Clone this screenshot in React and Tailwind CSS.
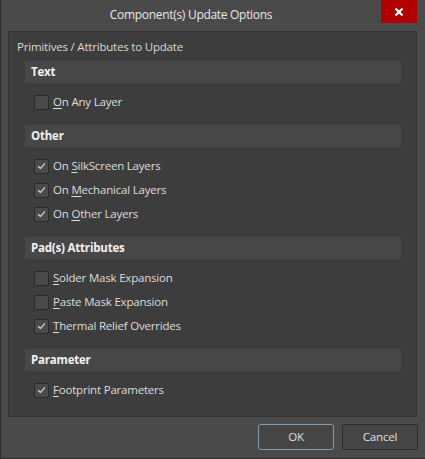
import React from "react";

const sections = [
  { title: "Text", items: [{ pre: "", key: "O", rest: "n Any Layer", checked: false }] },
  {
    title: "Other",
    items: [
      { pre: "On ", key: "S", rest: "ilkScreen Layers", checked: true },
      { pre: "On ", key: "M", rest: "echanical Layers", checked: true },
      { pre: "On ", key: "O", rest: "ther Layers", checked: true },
    ],
  },
  {
    title: "Pad(s) Attributes",
    items: [
      { pre: "", key: "S", rest: "older Mask Expansion", checked: false },
      { pre: "", key: "P", rest: "aste Mask Expansion", checked: false },
      { pre: "", key: "T", rest: "hermal Relief Overrides", checked: true },
    ],
  },
  { title: "Parameter", items: [{ pre: "", key: "F", rest: "ootprint Parameters", checked: true }] },
];

const CheckBox = ({ checked }) => (
  <span className="w-[15px] h-[15px] rounded-[2px] border border-[#2a2a2a] bg-[#4a4a4a] flex items-center justify-center">
    {checked && (
      <svg width="9" height="8" viewBox="0 0 9 8" fill="none">
        <path d="M1 4.2 L3.4 6.4 L8 1.4" stroke="#dddddd" strokeWidth="1.2" />
      </svg>
    )}
  </span>
);

const Row = ({ item }) => (
  <div className="h-6 flex items-center pl-[9px] gap-1">
    <CheckBox checked={item.checked} />
    <span>
      {item.pre}
      <span className="underline underline-offset-2">{item.key}</span>
      {item.rest}
    </span>
  </div>
);

export default function App() {
  return (
    <div
      className="w-[425px] h-[459px] bg-[#4a4a4a] border-l border-b border-[#2a2a2a] flex flex-col text-[11.5px] tracking-[-0.2px] text-[#dedede]"
      style={{ fontFamily: '"Segoe UI", "Open Sans", sans-serif' }}
    >
      {/* title bar */}
      <div className="h-[31px] flex">
        <div className="w-[380px] flex items-center justify-center">
          <span className="text-[12px] tracking-[-0.3px] text-[#e8e8e8] -mt-[1px]">Component(s) Update Options</span>
        </div>
        <button className="w-[36px] h-[23px] bg-[#b00000] flex items-center justify-center">
          <svg width="10" height="10" viewBox="0 0 10 10">
            <path d="M1.5 1.5 L8.5 8.5 M8.5 1.5 L1.5 8.5" stroke="#ffffff" strokeWidth="2.2" />
          </svg>
        </button>
      </div>

      {/* options panel */}
      <div className="ml-[7px] w-[409px] h-[386px] bg-[#3d3d3d] border border-[#333333] pt-[7px] pl-[8px] pr-[15px]">
        <div className="h-4 leading-4 text-[#dadada]">Primitives / Attributes to Update</div>
        <div className="pl-[8px] pt-[6px] flex flex-col gap-[11px]">
          {sections.map((s) => (
            <div key={s.title} className="flex flex-col">
              <div className="h-[22px] bg-[#474747] flex items-center pl-[6px] font-bold text-[#f2f2f2]">
                {s.title}
              </div>
              <div className="pt-[7px] flex flex-col">
                {s.items.map((it) => (
                  <Row key={it.key + it.rest} item={it} />
                ))}
              </div>
            </div>
          ))}
        </div>
      </div>

      {/* buttons */}
      <div className="flex justify-end gap-2 pr-[7px] pt-[7px]">
        <button className="w-[76px] h-[26px] rounded-[3px] border border-[#7f9cb2] bg-[#454545] text-[#e0e0e0]">
          OK
        </button>
        <button className="w-[76px] h-[26px] rounded-[3px] border border-[#2a2a2a] bg-[#454545] text-[#e0e0e0]">
          Cancel
        </button>
      </div>
    </div>
  );
}
